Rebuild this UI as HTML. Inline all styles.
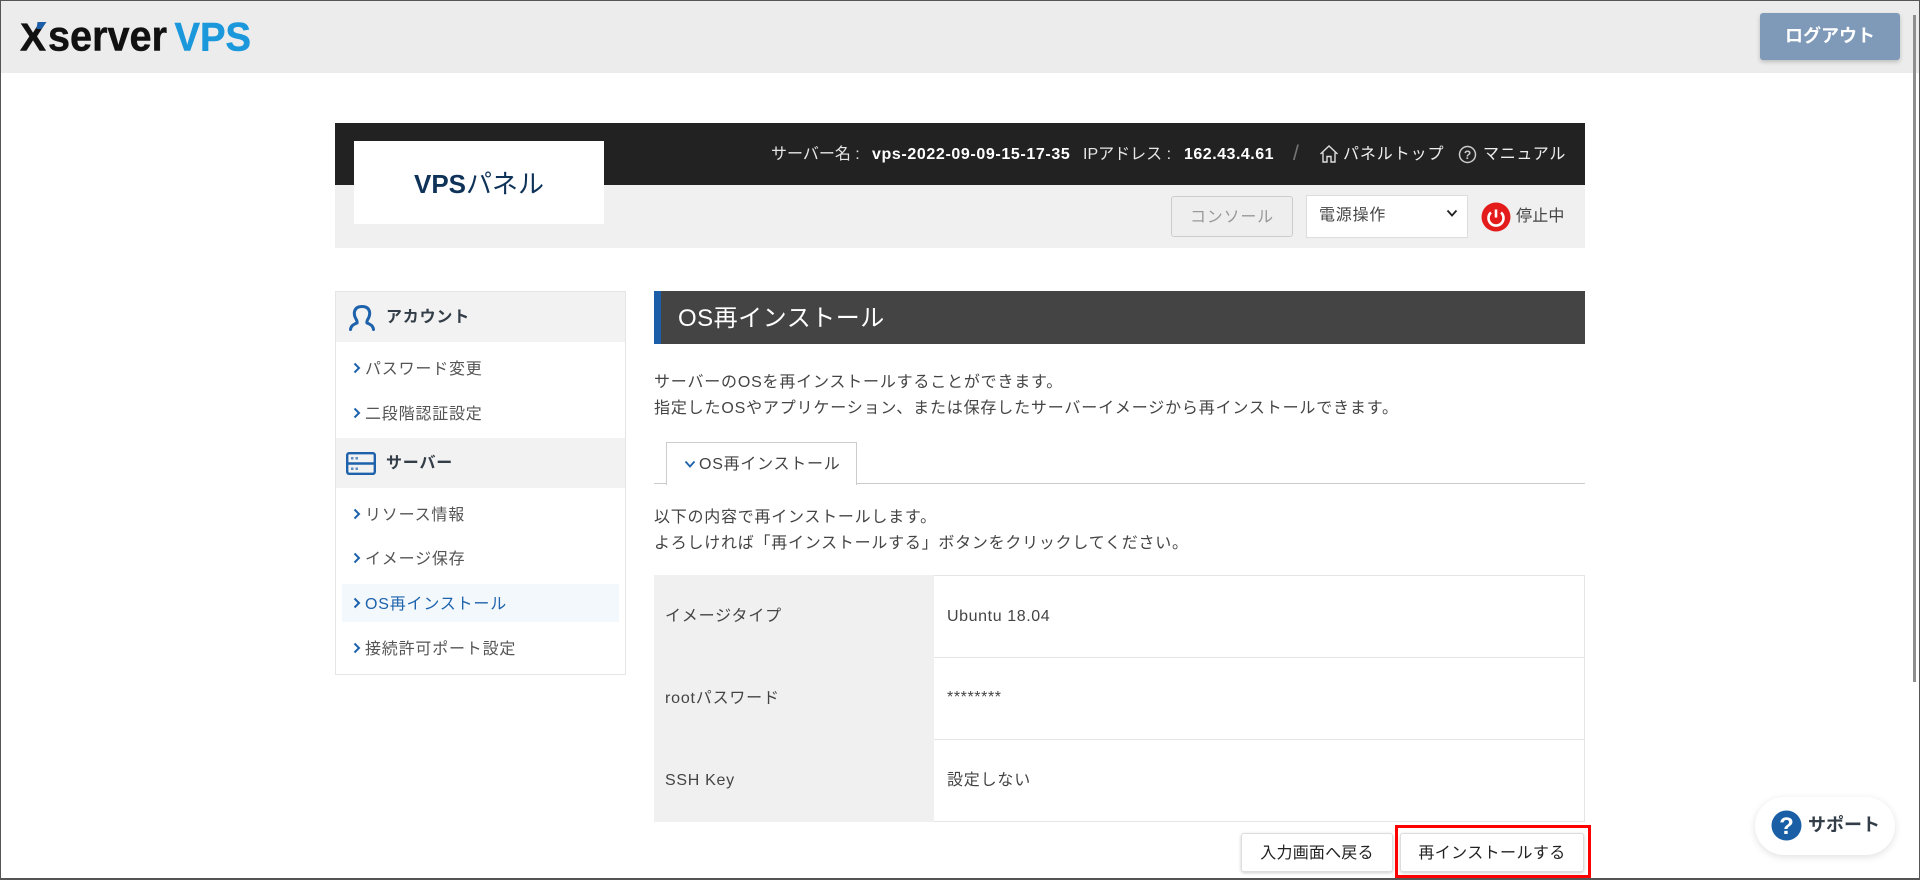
<!DOCTYPE html>
<html lang="ja"><head><meta charset="utf-8"><title>VPSパネル</title>
<style>
*{box-sizing:border-box}
html,body{margin:0;padding:0;width:1920px;height:880px;overflow:hidden;background:#fff}
body{position:relative;font-family:"Liberation Sans","Noto Sans CJK JP",sans-serif;font-size:16px;color:#444}
.a{position:absolute}
.t{position:absolute;white-space:nowrap;line-height:26px;height:26px}
.ls{letter-spacing:.05em}
.nav{color:#555}
.chev{position:absolute}
b{font-weight:700}
</style></head><body>
<div class="a" style="left:0;top:0;width:1920px;height:73px;background:#ececec"></div>
<svg class="a" style="left:10px;top:12px" width="250" height="50" viewBox="0 0 250 50">
<text x="10" y="38.500" font-family="Liberation Sans" font-weight="700" font-size="39" fill="#111" stroke="#111" stroke-width=".5" textLength="26" lengthAdjust="spacingAndGlyphs">X</text>
<path d="M27.500 10H36.500L31.500 17H26.500z" fill="#1c5fa8"/>
<text x="38" y="38.500" font-family="Liberation Sans" font-weight="700" font-size="43" fill="#111" stroke="#111" stroke-width=".5" textLength="119" lengthAdjust="spacingAndGlyphs">server</text>
<text x="164.500" y="38.500" font-family="Liberation Sans" font-weight="700" font-size="40" fill="#1b98dc" stroke="#1b98dc" stroke-width=".5" textLength="76.500" lengthAdjust="spacingAndGlyphs">VPS</text>
</svg>
<div class="a" style="left:1760px;top:13px;width:140px;height:47px;background:#7f9ab8;border-radius:3px;box-shadow:0 2px 4px rgba(0,0,0,.2);color:#fff;font-weight:700;font-size:18px;line-height:47px;text-align:center">ログアウト</div>

<div class="a" style="left:335px;top:123px;width:1250px;height:62px;background:#222"></div>
<div class="a" style="left:335px;top:185px;width:1250px;height:63px;background:#f0f0f0"></div>
<div class="a" style="left:354px;top:141px;width:250px;height:83px;background:#fff"></div>
<div class="t" style="left:414px;top:171px;color:#0f3358;font-size:26px"><b>VPS</b>パネル</div>

<div class="t" style="left:771px;top:142px;color:#e6e6e6">サーバー名 :</div>
<div class="t" style="left:872px;top:142px;color:#fff;font-weight:700;letter-spacing:.62px">vps-2022-09-09-15-17-35</div>
<div class="t" style="left:1083px;top:142px;color:#e6e6e6">IPアドレス :</div>
<div class="t" style="left:1184px;top:142px;color:#fff;font-weight:700;letter-spacing:.5px">162.43.4.61</div>
<div class="t" style="left:1293px;top:141px;color:#777;font-size:21px">/</div>
<svg class="a" style="left:1319px;top:144px" width="20" height="20" viewBox="0 0 20 20" fill="none" stroke="#ddd" stroke-width="1.400"><path d="M1.500 10 10 2l8.500 8M4 8.500V18h4v-5.500h4V18h4V8.500"/></svg>
<div class="t" style="left:1343px;top:142px;color:#eee;letter-spacing:.9px">パネルトップ</div>
<svg class="a" style="left:1458px;top:145px" width="19" height="19" viewBox="0 0 19 19"><circle cx="9.500" cy="9.500" r="8" fill="none" stroke="#ccc" stroke-width="1.500"/><text x="9.500" y="14" font-family="Liberation Sans" font-size="12" font-weight="700" fill="#ccc" text-anchor="middle">?</text></svg>
<div class="t" style="left:1483px;top:142px;color:#eee;letter-spacing:.7px">マニュアル</div>

<div class="a" style="left:1171px;top:196px;width:122px;height:41px;background:#eee;border:1px solid #ccc;border-radius:3px;color:#999;line-height:41px;text-align:center;letter-spacing:.8px">コンソール</div>
<div class="a" style="left:1306px;top:195px;width:162px;height:43px;background:#fff;border:1px solid #ddd"></div>
<div class="t" style="left:1319px;top:203px;font-size:16px;color:#444;letter-spacing:.8px">電源操作</div>
<svg class="a" style="left:1446px;top:209px" width="12" height="9" viewBox="0 0 12 9"><path d="M1.500 1.500 6 6.500l4.500-5" fill="none" stroke="#222" stroke-width="1.800"/></svg>
<svg class="a" style="left:1481px;top:202px" width="30" height="30" viewBox="0 0 30 30"><circle cx="15" cy="15" r="14.500" fill="#e31b1b"/><path d="M10 10.500a7.500 7.500 0 1 0 10 0" fill="none" stroke="#fff" stroke-width="2.600"/><path d="M15 7.500v8" stroke="#fff" stroke-width="2.600"/></svg>
<div class="t" style="left:1516px;top:204px;color:#444;letter-spacing:.2px">停止中</div>

<!-- sidebar -->
<div class="a" style="left:335px;top:291px;width:291px;height:384px;border:1px solid #e5e5e5;background:#fff"></div>
<div class="a" style="left:336px;top:292px;width:289px;height:50px;background:#f2f2f2"></div>
<div class="a" style="left:336px;top:438px;width:289px;height:50px;background:#f2f2f2"></div>
<div class="a" style="left:342px;top:584px;width:277px;height:38px;background:#f3f8fd"></div>
<svg class="a" style="left:349px;top:305px" width="26" height="26" viewBox="0 0 26 26" fill="none" stroke="#1d62ab" stroke-width="3" stroke-linecap="round"><path d="M1.500 24.500c.5-3.500 2.500-5 6.500-6.500 .5-1.500 0-2.500-1-4C5.500 11.500 5 9 5.500 6.500 6.500 2.500 9.500 1.500 13 1.500s6.500 1 7.500 5c.5 2.500 0 5-1.500 7.500-1 1.500-1.500 2.500-1 4 4 1.500 6 3 6.500 6.500"/></svg>
<svg class="a" style="left:346px;top:452px" width="30" height="23" viewBox="0 0 30 23"><rect x="1.200" y="1.200" width="27.600" height="20.600" rx="2" fill="none" stroke="#1d62ab" stroke-width="2.400"/><path d="M1 11.500h28" stroke="#1d62ab" stroke-width="2.400"/><path d="M5 5h2.500v2.500H5zM9.500 5H12v2.500H9.500zM5 15.500h2.500V18H5zM9.500 15.500H12V18H9.500z" fill="#5f8fc4"/></svg>
<div class="t" style="left:386px;top:305px;font-weight:700;color:#333d47;letter-spacing:.8px">アカウント</div>
<div class="t" style="left:386px;top:451px;font-weight:700;color:#333d47;letter-spacing:.8px">サーバー</div>

<svg class="chev" style="left:353px;top:362px" width="8" height="12" viewBox="0 0 8 12"><path d="M1.500 1.500 6 6l-4.500 4.500" fill="none" stroke="#1d62ab" stroke-width="2"/></svg>
<svg class="chev" style="left:353px;top:407px" width="8" height="12" viewBox="0 0 8 12"><path d="M1.500 1.500 6 6l-4.500 4.500" fill="none" stroke="#1d62ab" stroke-width="2"/></svg>
<svg class="chev" style="left:353px;top:508px" width="8" height="12" viewBox="0 0 8 12"><path d="M1.500 1.500 6 6l-4.500 4.500" fill="none" stroke="#1d62ab" stroke-width="2"/></svg>
<svg class="chev" style="left:353px;top:552px" width="8" height="12" viewBox="0 0 8 12"><path d="M1.500 1.500 6 6l-4.500 4.500" fill="none" stroke="#1d62ab" stroke-width="2"/></svg>
<svg class="chev" style="left:353px;top:597px" width="8" height="12" viewBox="0 0 8 12"><path d="M1.500 1.500 6 6l-4.500 4.500" fill="none" stroke="#1d62ab" stroke-width="2"/></svg>
<svg class="chev" style="left:353px;top:642px" width="8" height="12" viewBox="0 0 8 12"><path d="M1.500 1.500 6 6l-4.500 4.500" fill="none" stroke="#1d62ab" stroke-width="2"/></svg>
<div class="t ls nav" style="left:365px;top:357px">パスワード変更</div>
<div class="t ls nav" style="left:365px;top:402px">二段階認証設定</div>
<div class="t ls nav" style="left:365px;top:503px">リソース情報</div>
<div class="t ls nav" style="left:365px;top:547px">イメージ保存</div>
<div class="t ls" style="left:365px;top:592px;color:#1d62ab">OS再インストール</div>
<div class="t ls nav" style="left:365px;top:637px">接続許可ポート設定</div>

<!-- main -->
<div class="a" style="left:654px;top:291px;width:931px;height:53px;background:#444;border-left:7px solid #1d5ea8"></div>
<div class="t" style="left:678px;top:306px;font-size:24px;color:#fff;letter-spacing:.5px">OS再インストール</div>
<div class="t" style="left:654px;top:370px;letter-spacing:.8px">サーバーのOSを再インストールすることができます。</div>
<div class="t" style="left:654px;top:396px;letter-spacing:.83px">指定したOSやアプリケーション、または保存したサーバーイメージから再インストールできます。</div>
<div class="a" style="left:654px;top:483px;width:931px;height:1px;background:#ccc"></div>
<div class="a" style="left:666px;top:442px;width:191px;height:43px;background:#fff;border:1px solid #ccc;border-bottom:0"></div>
<svg class="a" style="left:684px;top:460px" width="12" height="9" viewBox="0 0 12 9"><path d="M1.500 1.500 6 6.500l4.500-5" fill="none" stroke="#1d62ab" stroke-width="1.800"/></svg>
<div class="t" style="left:699px;top:452px;letter-spacing:.75px">OS再インストール</div>
<div class="t" style="left:654px;top:505px;letter-spacing:.75px">以下の内容で再インストールします。</div>
<div class="t" style="left:654px;top:531px;letter-spacing:.75px">よろしければ「再インストールする」ボタンをクリックしてください。</div>

<!-- table -->
<div class="a" style="left:654px;top:575px;width:931px;height:247px;border:1px solid #e5e5e5;background:#fff"></div>
<div class="a" style="left:654px;top:575px;width:280px;height:247px;background:#f0f0f0"></div>
<div class="a" style="left:934px;top:657px;width:650px;height:1px;background:#e5e5e5"></div>
<div class="a" style="left:934px;top:739px;width:650px;height:1px;background:#e5e5e5"></div>
<div class="t ls" style="left:665px;top:604px">イメージタイプ</div>
<div class="t ls" style="left:665px;top:686px">rootパスワード</div>
<div class="t ls" style="left:665px;top:768px;letter-spacing:.7px">SSH Key</div>
<div class="t" style="left:947px;top:604px;letter-spacing:.6px">Ubuntu 18.04</div>
<div class="t" style="left:947px;top:685px;letter-spacing:.6px">********</div>
<div class="t ls" style="left:947px;top:768px">設定しない</div>

<!-- buttons -->
<div class="a" style="left:1241px;top:833px;width:152px;height:39px;background:#fff;border:1px solid #ddd;border-radius:3px;box-shadow:0 1px 3px rgba(0,0,0,.2);color:#222;line-height:39px;text-align:center;letter-spacing:.2px">入力画面へ戻る</div>
<div class="a" style="left:1400px;top:833px;width:184px;height:39px;background:#fff;border:1px solid #ddd;border-radius:3px;box-shadow:0 1px 3px rgba(0,0,0,.2);color:#222;line-height:39px;text-align:center;letter-spacing:.4px">再インストールする</div>
<div class="a" style="left:1395px;top:825px;width:196px;height:53px;border:3px solid #f00"></div>

<div class="a" style="left:1755px;top:797px;width:140px;height:58px;background:#fff;border-radius:29px;box-shadow:0 2px 8px rgba(0,0,0,.12)"></div>
<svg class="a" style="left:1771px;top:810px" width="31" height="31" viewBox="0 0 31 31"><circle cx="15.500" cy="15.500" r="15" fill="#1a5fa5"/><text x="15.500" y="24" font-family="Liberation Sans" font-weight="700" font-size="24" fill="#fff" text-anchor="middle">?</text></svg>
<div class="t" style="left:1808px;top:812px;font-size:18px;font-weight:700;color:#333d47">サポート</div>

<!-- window chrome -->
<div class="a" style="left:1913px;top:15px;width:3px;height:667px;background:#8f8f8f"></div>
<div class="a" style="left:0;top:0;width:1920px;height:880px;border:1.500px solid #555;border-bottom-width:2px;pointer-events:none"></div>
</body></html>
